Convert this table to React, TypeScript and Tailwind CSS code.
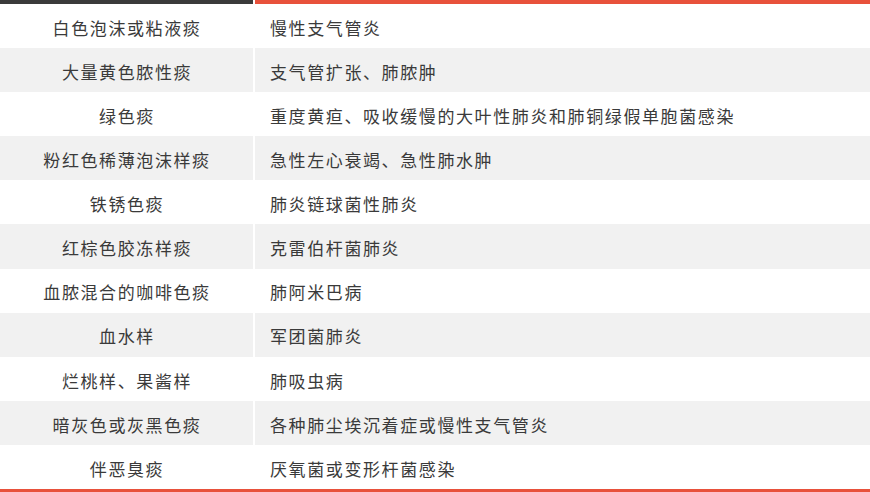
const rows: [string, string][] = [
  ["白色泡沫或粘液痰", "慢性支气管炎"],
  ["大量黄色脓性痰", "支气管扩张、肺脓肿"],
  ["绿色痰", "重度黄疸、吸收缓慢的大叶性肺炎和肺铜绿假单胞菌感染"],
  ["粉红色稀薄泡沫样痰", "急性左心衰竭、急性肺水肿"],
  ["铁锈色痰", "肺炎链球菌性肺炎"],
  ["红棕色胶冻样痰", "克雷伯杆菌肺炎"],
  ["血脓混合的咖啡色痰", "肺阿米巴病"],
  ["血水样", "军团菌肺炎"],
  ["烂桃样、果酱样", "肺吸虫病"],
  ["暗灰色或灰黑色痰", "各种肺尘埃沉着症或慢性支气管炎"],
  ["伴恶臭痰", "厌氧菌或变形杆菌感染"],
];

export default function App() {
  return (
    <div className="w-[870px] h-[492px] bg-white overflow-hidden font-['Noto_Sans_CJK_SC','Noto_Sans',sans-serif] text-[#3a3a3a] text-[17px] tracking-[1.6px]">
      {/* top bars */}
      <div className="flex h-[4px]">
        <div className="w-[253px] bg-[#3a3a3a]" />
        <div className="w-[2px] bg-white" />
        <div className="flex-1 bg-[#e8513b]" />
      </div>

      <div className="border-b-[3px] border-[#e8513b]">
        {rows.map(([left, right], i) => (
          <div
            key={i}
            className={`flex h-[44.1px] items-center ${i % 2 === 1 ? "bg-[#f1f1f1]" : "bg-white"}`}
          >
            <div className="w-[253px] h-full flex items-center justify-center pt-[3px] pl-[1px]">
              {left}
            </div>
            <div className="w-[2px] h-full bg-white" />
            <div className="flex-1 h-full flex items-center pl-[15px] pt-[3px]">
              {right}
            </div>
          </div>
        ))}
      </div>
    </div>
  );
}
